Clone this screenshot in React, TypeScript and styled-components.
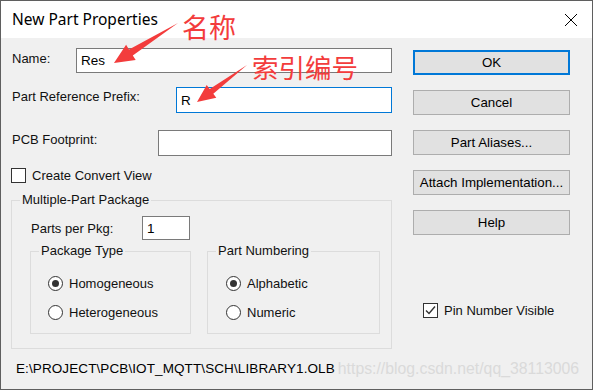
import React from "react";
import styled, { createGlobalStyle } from "styled-components";

const GlobalStyle = createGlobalStyle`
  html, body {
    margin: 0;
    padding: 0;
    background: #fff;
  }
  body {
    font-family: "Liberation Sans", Arial, sans-serif;
    font-size: 13px;
    color: #000;
  }
  * {
    box-sizing: border-box;
  }
`;

const Window = styled.div`
  position: relative;
  width: 593px;
  height: 390px;
  border: 1px solid #5f5f5f;
  display: flex;
  flex-direction: column;
  background: #f0f0f0;
  overflow: hidden;
`;

const TitleBar = styled.div`
  height: 37px;
  flex: none;
  background: #fff;
  display: flex;
  align-items: center;
  justify-content: space-between;
  padding: 0 14px 0 11px;
`;

const Title = styled.span`
  font-family: "Noto Sans", "Open Sans", sans-serif;
  font-size: 15.5px;
  color: #000;
  margin-top: -1px;
`;

const Body = styled.div`
  flex: 1;
  display: flex;
  padding-left: 10px;
`;

const LeftPane = styled.div`
  width: 381px;
  display: flex;
  flex-direction: column;
`;

const RightPane = styled.div`
  width: 157px;
  margin-left: 21px;
  display: flex;
  flex-direction: column;
  padding-top: 12px;
`;

const FieldRow = styled.div<{ $top: number; $h: number }>`
  display: flex;
  align-items: center;
  margin-top: ${(p) => p.$top}px;
  height: ${(p) => p.$h}px;
  padding-left: 1px;
`;

const Label = styled.span<{ $w?: number; $lift?: number }>`
  color: #111;
  white-space: nowrap;
  flex: none;
  width: ${(p) => (p.$w ? `${p.$w}px` : "auto")};
  margin-bottom: ${(p) => (p.$lift ? p.$lift * 2 : 0)}px;
`;

const TextBox = styled.div<{ $w: number; $focused?: boolean; $inline?: boolean }>`
  margin-left: ${(p) => (p.$inline ? "0" : "auto")};
  width: ${(p) => p.$w}px;
  height: 100%;
  background: #fff;
  border: 1px solid ${(p) => (p.$focused ? "#0078d7" : "#7a7a7a")};
  display: flex;
  align-items: center;
  padding-left: 4px;
  font-size: 13.5px;
`;

const CheckRow = styled.label<{ $top: number }>`
  display: flex;
  align-items: center;
  gap: 6px;
  margin-top: ${(p) => p.$top}px;
  height: 15px;
`;

const Box = styled.span`
  width: 15px;
  height: 15px;
  border: 1px solid #333;
  background: #fff;
  display: flex;
  align-items: center;
  justify-content: center;
  flex: none;
`;

const Group = styled.fieldset<{ $w: number; $pl: number; $pt: number; $pb: number }>`
  margin: 0;
  min-width: 0;
  width: ${(p) => p.$w}px;
  border: 1px solid #dcdcdc;
  padding: ${(p) => p.$pt}px 0 ${(p) => p.$pb}px ${(p) => p.$pl}px;
  & > legend {
    margin-left: ${(p) => 8 - p.$pl}px;
  }
`;

const Legend = styled.legend`
  padding: 0 2px;
  line-height: 16px;
  color: #111;
`;

const OuterGroupWrap = styled.div`
  margin-top: 9px;
`;

const SubGroups = styled.div`
  display: flex;
  gap: 16px;
  margin-top: 3px;
`;

const RadioList = styled.div`
  display: flex;
  flex-direction: column;
  gap: 13px;
`;

const RadioRow = styled.label`
  display: flex;
  align-items: center;
  gap: 6px;
  height: 16px;
`;

const Circle = styled.span<{ $checked?: boolean }>`
  width: 15px;
  height: 15px;
  border-radius: 50%;
  border: 1px solid #333;
  background: #fff;
  display: flex;
  align-items: center;
  justify-content: center;
  flex: none;
  &::after {
    content: "";
    width: 7px;
    height: 7px;
    border-radius: 50%;
    background: ${(p) => (p.$checked ? "#333" : "transparent")};
  }
`;

const PathLine = styled.div`
  margin-top: 12px;
  padding-left: 5px;
  height: 16px;
  line-height: 16px;
  display: flex;
  align-items: center;
  white-space: nowrap;
  font-size: 13.5px;
  letter-spacing: 0.1px;
`;

const Watermark = styled.span`
  margin-left: 3px;
  font-size: 15.8px;
  color: #dadada;
  letter-spacing: 0;
`;

const Buttons = styled.div`
  display: flex;
  flex-direction: column;
  gap: 15px;
`;

const Button = styled.button<{ $default?: boolean }>`
  height: 25px;
  width: 100%;
  background: #e1e1e1;
  border: 1px solid ${(p) => (p.$default ? "#0078d7" : "#adadad")};
  box-shadow: ${(p) => (p.$default ? "inset 0 0 0 1px #0078d7" : "none")};
  font-family: "Liberation Sans", Arial, sans-serif;
  font-size: 13.3px;
  color: #000;
  padding: 0;
`;

const PinRow = styled(CheckRow)`
  margin-left: 10px;
`;

const Annotation = styled.span<{ $x: number; $y: number; $size: number }>`
  position: absolute;
  left: ${(p) => p.$x}px;
  top: ${(p) => p.$y}px;
  font-family: "Noto Sans CJK SC", sans-serif;
  font-size: ${(p) => p.$size}px;
  line-height: 1;
  color: #f33c3c;
  white-space: nowrap;
`;

const ArrowLayer = styled.svg`
  position: absolute;
  left: 0;
  top: 0;
  pointer-events: none;
`;

function CloseIcon() {
  return (
    <svg width="14" height="14" viewBox="0 0 14 14">
      <path d="M1 1 L13 13 M13 1 L1 13" stroke="#000" strokeWidth="1" />
    </svg>
  );
}

function Tick() {
  return (
    <svg width="13" height="13" viewBox="0 0 13 13">
      <path d="M2 6.5 L5 9.5 L11 2.5" stroke="#333" strokeWidth="1.4" fill="none" />
    </svg>
  );
}

function Radio({ label, checked }: { label: string; checked?: boolean }) {
  return (
    <RadioRow>
      <Circle $checked={checked} />
      <Label>{label}</Label>
    </RadioRow>
  );
}

export default function App() {
  return (
    <>
      <GlobalStyle />
      <Window>
        <TitleBar>
          <Title>New Part Properties</Title>
          <CloseIcon />
        </TitleBar>
        <Body>
          <LeftPane>
            <FieldRow $top={10} $h={25}>
              <Label $lift={2}>Name:</Label>
              <TextBox $w={316}>Res</TextBox>
            </FieldRow>
            <FieldRow $top={14} $h={26}>
              <Label $lift={4}>Part Reference Prefix:</Label>
              <TextBox $w={216} $focused>
                R
              </TextBox>
            </FieldRow>
            <FieldRow $top={17} $h={26}>
              <Label $lift={4}>PCB Footprint:</Label>
              <TextBox $w={234} />
            </FieldRow>
            <CheckRow $top={12}>
              <Box />
              <Label>Create Convert View</Label>
            </CheckRow>
            <OuterGroupWrap>
              <Group $w={381} $pl={18} $pt={8} $pb={14}>
                <Legend>Multiple-Part Package</Legend>
                <FieldRow $top={0} $h={24}>
                  <Label $w={111}>Parts per Pkg:</Label>
                  <TextBox $w={48} $inline>
                    1
                  </TextBox>
                </FieldRow>
                <SubGroups>
                  <Group $w={161} $pl={17} $pt={16} $pb={13}>
                    <Legend>Package Type</Legend>
                    <RadioList>
                      <Radio label="Homogeneous" checked />
                      <Radio label="Heterogeneous" />
                    </RadioList>
                  </Group>
                  <Group $w={173} $pl={18} $pt={16} $pb={13}>
                    <Legend>Part Numbering</Legend>
                    <RadioList>
                      <Radio label="Alphabetic" checked />
                      <Radio label="Numeric" />
                    </RadioList>
                  </Group>
                </SubGroups>
              </Group>
            </OuterGroupWrap>
            <PathLine>
              E:\PROJECT\PCB\IOT_MQTT\SCH\LIBRARY1.OLB
              <Watermark>https://blog.csdn.net/qq_38113006</Watermark>
            </PathLine>
          </LeftPane>
          <RightPane>
            <Buttons>
              <Button $default>OK</Button>
              <Button>Cancel</Button>
              <Button>Part Aliases...</Button>
              <Button>Attach Implementation...</Button>
              <Button>Help</Button>
            </Buttons>
            <PinRow $top={68}>
              <Box>
                <Tick />
              </Box>
              <Label>Pin Number Visible</Label>
            </PinRow>
          </RightPane>
        </Body>
        <Annotation $x={181} $y={12} $size={27}>
          名称
        </Annotation>
        <Annotation $x={251} $y={53} $size={26.5}>
          索引编号
        </Annotation>
        <ArrowLayer width="593" height="390">
          <polygon
            points="113,62 125.1,43.8 128,48.4 177,22 131.8,54.4 134.7,59"
            fill="#f33c3c"
          />
          <polygon
            points="196,101 205.7,83.9 208.7,87.9 246,64 212.3,92.7 215.3,96.7"
            fill="#f33c3c"
          />
        </ArrowLayer>
      </Window>
    </>
  );
}
